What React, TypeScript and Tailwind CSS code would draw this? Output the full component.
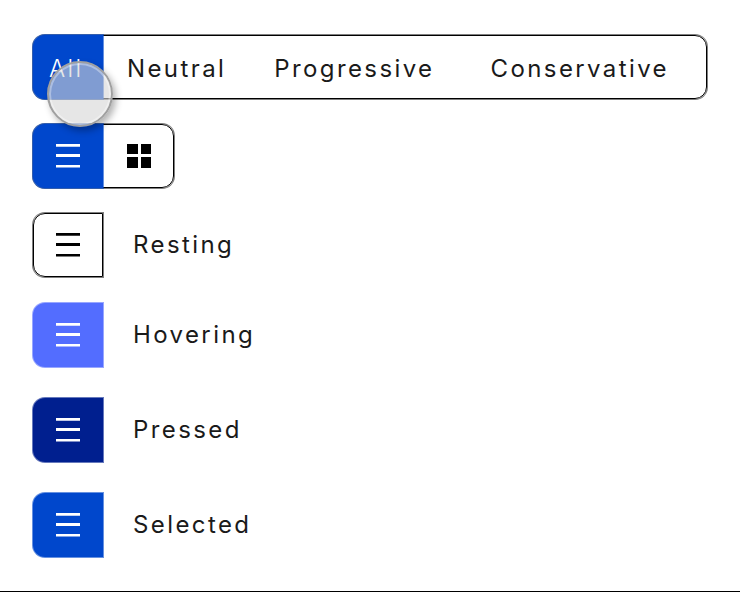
import { clsx, type ClassValue } from 'clsx'
import { twMerge } from 'tailwind-merge'
import { useState } from 'react'

function cn(...inputs: ClassValue[]) {
  return twMerge(clsx(inputs))
}

interface IconProps {
  className?: string
}

const ListIcon = ({ className }: IconProps) => (
  <svg viewBox="0 0 24 24" fill="currentColor" aria-hidden="true" className={cn('w-6 h-6', className)}>
    <path d="M0 0h24v2.7H0zM0 10h24v2.9H0zM0 20.9h24v2.7H0z" />
  </svg>
)

const GridIcon = ({ className }: IconProps) => (
  <svg viewBox="0 0 24 24" fill="currentColor" aria-hidden="true" className={cn('w-6 h-6', className)}>
    <path d="M0 0h11v10H0zM14 0h10v10H14zM0 13h11v11H0zM14 13h10v11H14z" />
  </svg>
)

const selectedStyle = 'bg-[#0047cc] text-white ring-1 ring-[#0047cc]/60'
const barStyle = 'flex h-16 rounded-xl border border-black ring-1 ring-black/50'

interface Tab {
  label: string
  spacing: string
}

const tabs: Tab[] = [
  { label: 'All', spacing: 'w-[70px] pl-4 -my-px -ml-px rounded-l-xl' },
  { label: 'Neutral', spacing: 'pl-6 pr-6' },
  { label: 'Progressive', spacing: 'pl-6 pr-8' },
  { label: 'Conservative', spacing: 'flex-1 pl-6 pr-6 rounded-r-xl' },
]

const FilterBar = () => {
  const [active, setActive] = useState('All')

  return (
    <div className={cn(barStyle, 'relative')}>
      {tabs.map((tab) => (
        <button
          key={tab.label}
          type="button"
          aria-pressed={active === tab.label}
          onClick={() => setActive(tab.label)}
          className={cn(
            'pt-1 text-left',
            tab.spacing,
            active === tab.label && selectedStyle,
            active === tab.label && 'font-light'
          )}
        >
          {tab.label}
        </button>
      ))}

      {/* Touch pointer */}
      <div className="pointer-events-none absolute left-[13px] top-[25px] z-10 h-[66px] w-[66px] rounded-full border-2 border-[#a0a0a0] bg-[#d5d5d5]/60 shadow-[3px_4px_7px_rgba(0,0,0,0.3),inset_0_0_0_2px_rgba(255,255,255,0.35)]" />
    </div>
  )
}

const ViewToggle = () => {
  const [view, setView] = useState('list')

  return (
    <div className={cn(barStyle, 'mt-[25px] w-[141px]')}>
      <button
        type="button"
        aria-label="List"
        aria-pressed={view === 'list'}
        onClick={() => setView('list')}
        className={cn(
          '-my-px -ml-px flex w-[70px] items-center justify-center rounded-l-xl text-black',
          view === 'list' && selectedStyle
        )}
      >
        <ListIcon />
      </button>
      <button
        type="button"
        aria-label="Grid"
        aria-pressed={view === 'grid'}
        onClick={() => setView('grid')}
        className={cn(
          '-my-px -mr-px flex flex-1 items-center justify-center rounded-r-xl text-black',
          view === 'grid' && selectedStyle
        )}
      >
        <GridIcon />
      </button>
    </div>
  )
}

interface StateRow {
  label: string
  row: string
  button: string
}

const states: StateRow[] = [
  { label: 'Resting', row: 'mt-[25px]', button: 'border border-black ring-1 ring-black/50' },
  { label: 'Hovering', row: 'mt-[26px]', button: 'bg-[#536dff] text-white ring-1 ring-[#536dff]/60' },
  { label: 'Pressed', row: 'mt-[31px]', button: 'bg-[#001f8f] text-white ring-1 ring-[#001f8f]/60' },
  { label: 'Selected', row: 'mt-[31px]', button: selectedStyle },
]

export default function App() {
  return (
    <main className="border-b border-black bg-white px-[33px] pt-[35px] pb-[34px] font-['Inter',sans-serif] text-2xl tracking-widest text-[#1a1a1a]">
      <FilterBar />
      <ViewToggle />

      {/* Button states */}
      {states.map((state) => (
        <div key={state.label} className={cn('flex items-center gap-[30px]', state.row)}>
          <button
            type="button"
            aria-labelledby={state.label}
            className={cn(
              'flex h-16 w-[70px] items-center justify-center rounded-l-xl text-black',
              state.button
            )}
          >
            <ListIcon />
          </button>
          <span id={state.label}>{state.label}</span>
        </div>
      ))}
    </main>
  )
}
